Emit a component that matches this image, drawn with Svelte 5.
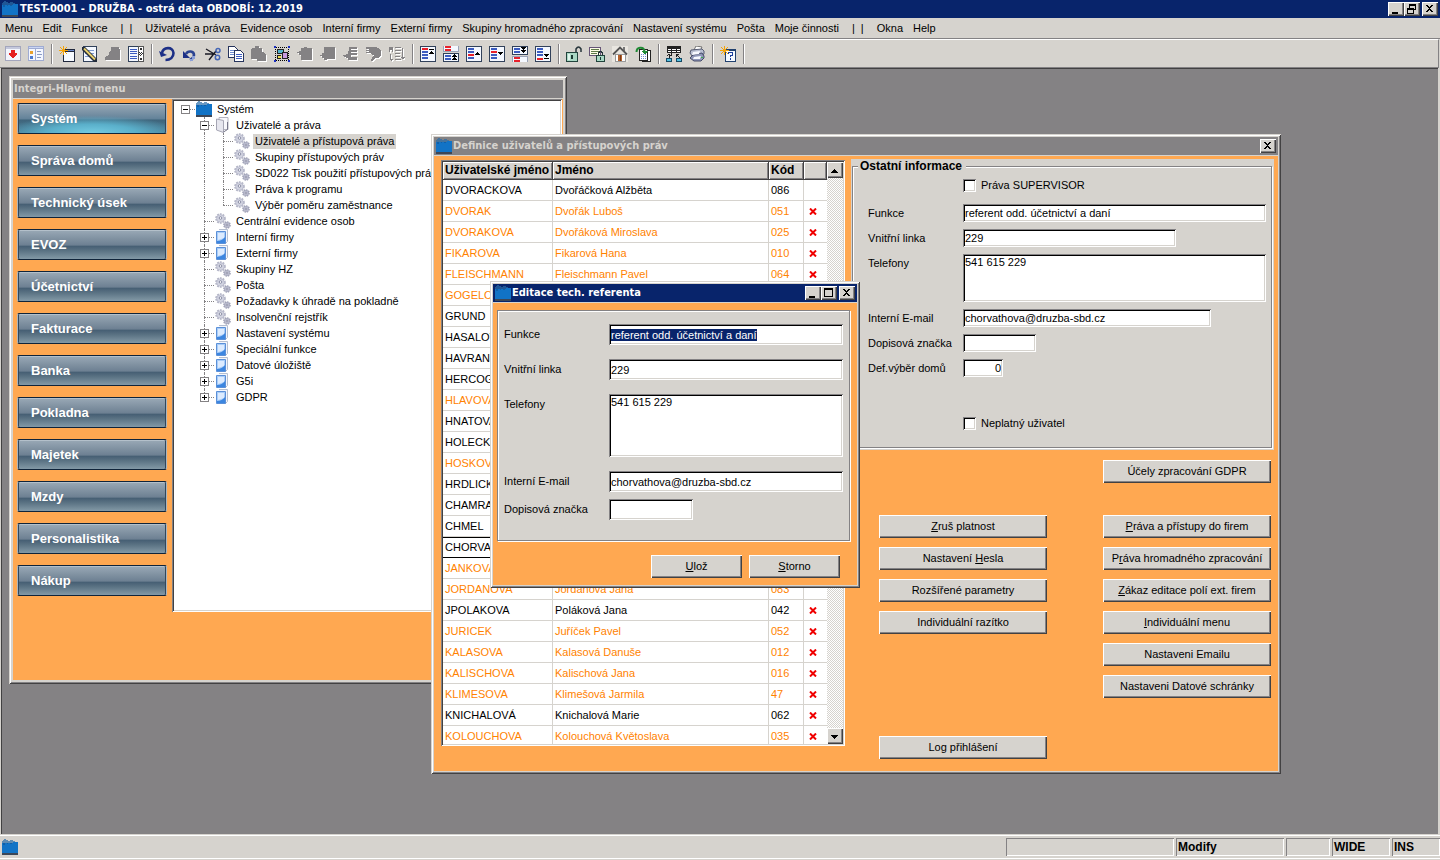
<script lang="ts">
  import { onMount } from 'svelte';

  type User = { login: string; name: string; code: string; active: boolean; flag: boolean };
  type Node = { label: string; level: number; kind: 'root' | 'open' | 'leaf' | 'folder'; last?: boolean };

  const menuItems = [
    'Menu', 'Edit', 'Funkce', '|', '|', 'Uživatelé a práva', 'Evidence osob', 'Interní firmy',
    'Externí firmy', 'Skupiny hromadného zpracování', 'Nastavení systému', 'Pošta',
    'Moje činnosti', '|', '|', 'Okna', 'Help'
  ];

  const modules = [
    'Systém', 'Správa domů', 'Technický úsek', 'EVOZ', 'Účetnictví', 'Fakturace',
    'Banka', 'Pokladna', 'Majetek', 'Mzdy', 'Personalistika', 'Nákup'
  ];
  let activeModule = $state('Systém');

  const tree: Node[] = [
    { label: 'Systém', level: 0, kind: 'root' },
    { label: 'Uživatelé a práva', level: 1, kind: 'open' },
    { label: 'Uživatelé a přístupová práva', level: 2, kind: 'leaf' },
    { label: 'Skupiny přístupových práv', level: 2, kind: 'leaf' },
    { label: 'SD022 Tisk použití přístupových práv', level: 2, kind: 'leaf' },
    { label: 'Práva k programu', level: 2, kind: 'leaf' },
    { label: 'Výběr poměru zaměstnance', level: 2, kind: 'leaf', last: true },
    { label: 'Centrální evidence osob', level: 1, kind: 'leaf' },
    { label: 'Interní firmy', level: 1, kind: 'folder' },
    { label: 'Externí firmy', level: 1, kind: 'folder' },
    { label: 'Skupiny HZ', level: 1, kind: 'leaf' },
    { label: 'Pošta', level: 1, kind: 'leaf' },
    { label: 'Požadavky k úhradě na pokladně', level: 1, kind: 'leaf' },
    { label: 'Insolvenční rejstřík', level: 1, kind: 'leaf' },
    { label: 'Nastavení systému', level: 1, kind: 'folder' },
    { label: 'Speciální funkce', level: 1, kind: 'folder' },
    { label: 'Datové úložiště', level: 1, kind: 'folder' },
    { label: 'G5i', level: 1, kind: 'folder' },
    { label: 'GDPR', level: 1, kind: 'folder', last: true }
  ];
  let selectedNode = $state('Uživatelé a přístupová práva');

  // login, name, code, active, flag
  const users: User[] = [
    ['DVORACKOVA', 'Dvořáčková Alžběta', '086', 1, 0],
    ['DVORAK', 'Dvořák Luboš', '051', 0, 1],
    ['DVORAKOVA', 'Dvořáková Miroslava', '025', 0, 1],
    ['FIKAROVA', 'Fikarová Hana', '010', 0, 1],
    ['FLEISCHMANN', 'Fleischmann Pavel', '064', 0, 1],
    ['GOGELOVA', '', '', 0, 0],
    ['GRUND', '', '', 1, 0],
    ['HASALOVA', '', '', 1, 0],
    ['HAVRAN', '', '', 1, 0],
    ['HERCOG', '', '', 1, 0],
    ['HLAVOVA', '', '', 0, 0],
    ['HNATOVA', '', '', 1, 0],
    ['HOLECKOVA', '', '', 1, 0],
    ['HOSKOVA', '', '', 0, 0],
    ['HRDLICKA', '', '', 1, 0],
    ['CHAMRA', '', '', 1, 0],
    ['CHMEL', '', '', 1, 0],
    ['CHORVATHOVA', '', '', 1, 0],
    ['JANKOVA', '', '', 0, 0],
    ['JORDANOVA', 'Jordanová Jana', '083', 0, 0],
    ['JPOLAKOVA', 'Poláková Jana', '042', 1, 1],
    ['JURICEK', 'Juříček Pavel', '052', 0, 1],
    ['KALASOVA', 'Kalasová Danuše', '012', 0, 1],
    ['KALISCHOVA', 'Kalischová Jana', '016', 0, 1],
    ['KLIMESOVA', 'Klimešová Jarmila', '47', 0, 1],
    ['KNICHALOVÁ', 'Knichalová Marie', '062', 1, 1],
    ['KOLOUCHOVA', 'Kolouchová Květoslava', '035', 0, 1]
  ].map(([login, name, code, active, flag]) => ({ login, name, code, active: !!active, flag: !!flag }) as User);
  let selectedUser = $state('CHORVATHOVA');

  // & marks the access key
  const leftActions = ['&Zruš platnost', 'Nastavení &Hesla', 'Rozšířené parametry', 'Individuální razítko'];
  const rightActions = [
    '&Práva a přístupy do firem', 'P&ráva hromadného zpracování', '&Zákaz editace polí ext. firem',
    '&Individuální menu', 'Nastaveni Emailu', 'Nastaveni Datové schránky'
  ];

  let person = $state({
    job: 'referent odd. účetnictví a daní',
    line: '229',
    phones: '541 615 229',
    email: 'chorvathova@druzba-sbd.cz',
    mark: '',
    houses: '0'
  });

  let jobInput: HTMLInputElement;
  onMount(() => {
    jobInput.focus();
    jobInput.select();
  });

  const page = (x = 0, y = 0, w = 16, h = 16) =>
    `<rect x="${x}" y="${y}" width="${w}" height="${h}" fill="#31415a"/><rect x="${x + 1}" y="${y + 1}" width="${w - 2}" height="${h - 2}" fill="#f4f8ff"/>`;
  const bars = (rows: [number, string][]) =>
    rows.map(([y, c]) => `<rect x="2" y="${y}" width="6" height="2" fill="${c}"/>`).join('');
  const R = '#e8212b';
  const B = '#3c5cc0';
  const ghost = (d: string) => `<path d="${d}" transform="translate(1 1)" fill="#fff"/><path d="${d}" fill="#848284"/>`;

  const icons: Record<string, string> = {
    download: `<path d="M0 0h16v15H0z" fill="#a3a6bd"/><path d="M1 3h14v11H1z" fill="#f3f5fc"/><path d="M1 1h14v2H1z" fill="#c4c8dc"/><path d="M6 4h4v3h2v2h-1v1h-1v1H9v1H7v-1H6v-1H5V9H4V7h2z" fill="#e42020"/>`,
    layout: `<path d="M0 0h16v15H0z" fill="#9fabd2"/><path d="M1 3h6v11H1zM8 3h7v11H8z" fill="#f4f7ff"/><path d="M1 1h14v1H1z" fill="#cbd6f3"/><path d="M2 5h3v3H2z" fill="#e9a12c"/><path d="M2 10h3v3H2z" fill="#4b79cf"/><path d="M9 5h4v1H9zM9 8h5v1H9zM9 11h4v1H9z" fill="#8a9bc4"/>`,
    create: `<path d="M4 3h12v13H4z" fill="#20283c"/><path d="M5 6h10v9H5z" fill="#f6faff"/><path d="M5 4h10v1H5z" fill="#6f8dd0"/><path d="M4 0h1v3l3-2-2 3h3v1H6l2 3-3-2v3H4V6L1 8l2-3H0V4h3L1 1l3 2z" fill="#f5a50a"/>`,
    edit: `${page(1, 0, 14, 16)}<path d="M3 4.500h9M3 7.500h9M3 10.500h9" stroke="#7e9ad0"/><path d="M0 1h3l12 12v3h-3L0 4z" fill="#222b3a" shape-rendering="auto"/><path d="M2 2.500l11 11" stroke="#e7cf6c" stroke-width="2" shape-rendering="auto"/>`,
    ghost1: ghost('M6 1h8v2l1 1v10H0v-3l1-1 3-1V6l1-1h1z'),
    list: `${page(0, 0, 11, 16)}<path d="M2 3.500h7M2 5.500h7M2 7.500h7M2 10.500h7M2 12.500h7" stroke="#3c5cc0"/><path d="M10 0h6v16h-6z" fill="#555"/><path d="M11 1h4v14h-4z" fill="#fff"/><path d="M12 2h2v2h-2zM12 12h2v2h-2zM11 6h1v1h-1zM13 6h1v1h-1zM12 7h1v1h-1zM14 7h1v1h-1zM11 8h1v1h-1zM13 8h1v1h-1zM12 9h1v1h-1z" fill="#333"/>`,
    undo: `<path d="M3 7C4 1 14 0 14.500 7c0 4-3 7-8 7" fill="none" stroke="#1c2f86" stroke-width="2.600" shape-rendering="auto"/><path d="M0 5l2 6 6-2z" fill="#1c2f86" shape-rendering="auto"/>`,
    redo: `<path d="M4 8c2-4 8-3 8 1 0 3-2 4-4 5" fill="none" stroke="#2b4391" stroke-width="2.600" shape-rendering="auto"/><path d="M1 5v7h7z" fill="#1c2f86" shape-rendering="auto"/><path d="M10 10h3v3h-2v2H8v-2h2z" fill="#8ca0d8"/>`,
    cut: `<path d="M1 3l10 6M0 8h9M4 14l7-9" stroke="#1a1a24" stroke-width="1.400" shape-rendering="auto"/><circle cx="13" cy="4.500" r="2" fill="none" stroke="#4566b5" stroke-width="1.500" shape-rendering="auto"/><circle cx="12.500" cy="11.500" r="2.200" fill="none" stroke="#4566b5" stroke-width="1.500" shape-rendering="auto"/>`,
    copy: `<path d="M.5.500h6l3 3v8h-9z" fill="#fff" stroke="#26345c"/><path d="M2 4.500h5M2 6.500h5M2 8.500h5" stroke="#6f8dd0"/><path d="M6.500 4.500h6l3 3v8h-9z" fill="#fff" stroke="#26345c"/><path d="M8 8.500h6M8 10.500h6M8 12.500h6" stroke="#3c5cc0"/>`,
    paste: ghost('M1 2h3V0h4v2h3v4h1l3 3v6H6v-2H0V3z'),
    select: `<path d="M1.500 1.500h13v13h-13z" fill="none" stroke="#000" stroke-dasharray="1 1"/><path d="M3 3h7v5H3z" fill="#222"/><path d="M4 4h5v3H4z" fill="#52b6cf"/><path d="M8 6h6v7H8z" fill="#222"/><path d="M9 7h4v5H9z" fill="#c79be0"/><path d="M3 9h4v4H3z" fill="#222"/><path d="M4 10h3v2H4z" fill="#f0e04a"/><path d="M0 0h2v2H0zM14 0h2v2h-2zM0 14h2v2H0zM14 14h2v2h-2z" fill="#1b2fc0"/>`,
    ghost2: ghost('M4 2h3V1h3v1h5v12H4V9H2V7H0V6h2V5h2z'),
    ghost3: ghost('M4 1h11v12H7v1H4v-2H2v-2H0V9h2V7h2z'),
    ghost4: ghost('M6 1h8v2H8v1h6v2H8v1h6v2H8v2h6v3H5v-2H3v-1H1v-1H0V9h3V8h2V5h1z'),
    ghost5: ghost('M0 1h9l4 1 2 3v4l-3 3H9l-2 2-1 1H5l1-4 2-2H6L4 7H0V6h3V5H0V4h3V3H0z'),
    ghost6: ghost('M0 1h4v5H3V4H1v2H0zM6 1h6v1H6zM6 4h6v1H6zM6 7h5v1H6zM6 10h5v1H6zM6 13h6v1H6zM1 8h1v5h2l-2 2-2-2h1zM13 2h1v9h2l-2 3-3-3h2z'),
    first: `${page()}${bars([[2, R], [5, B], [8, B], [11, B]])}<path d="M9 3h5v1H9zM11 5h1v1h1v1h1v1H9V7h1V6h1z" fill="#000"/>`,
    pageUp: `<path d="M0 0h1v5h14V0h1v6H0z" fill="#9aa3b8"/><path d="M1 0h14v5H1z" fill="#f4f8ff"/>${page(0, 7, 16, 9)}${bars([[0, R], [3, R], [9, B], [12, B]])}<path d="M11 8h1v1h1v1h1v1H9v-1h1V9h1zM11 11h1v1h1v1h1v1H9v-1h1v-1h1z" fill="#000"/>`,
    prev: `${page()}${bars([[2, B], [5, B], [8, R], [11, B]])}<path d="M11 6h1v1h1v1h1v1H9V8h1V7h1z" fill="#000"/>`,
    next: `${page()}${bars([[2, B], [5, R], [8, B], [11, B]])}<path d="M9 6h5v1h-1v1h-1v1h-1V8h-1V7H9z" fill="#000"/>`,
    pageDown: `${page(0, 0, 16, 9)}<path d="M0 10h16v6h-1v-5H1v5H0z" fill="#9aa3b8"/><path d="M1 11h14v5H1z" fill="#f4f8ff"/>${bars([[2, B], [5, B], [11, R], [14, R]])}<path d="M9 1h5v1h-1v1h-1v1h-1V3h-1V2H9zM9 4h5v1h-1v1h-1v1h-1V6h-1V5H9z" fill="#000"/>`,
    lastRec: `${page()}${bars([[2, B], [5, B], [8, B], [12, R]])}<path d="M9 8h5v1h-1v1h-1v1h-1v-1h-1V9H9zM9 12h5v1H9z" fill="#000"/>`,
    unlock: `<path d="M10 7V3q2.500-4 5 0v3" fill="none" stroke="#26343a" stroke-width="1.500" shape-rendering="auto"/><path d="M0 6h12v10H0z" fill="#21433c"/><path d="M1 7h10v8H1z" fill="#a9d8c4"/><path d="M2 8h2v6H2z" fill="#e0f5ec"/><path d="M5 9h2v4H5z" fill="#1b3a33"/>`,
    lockList: `<path d="M0 1h12v9H0z" fill="#657"/><path d="M1 2h10v7H1z" fill="#fdfde8"/><path d="M2 3.500h8M2 5.500h8M2 7.500h6" stroke="#5f7a4a"/><path d="M9.500 10V7q2-3 4 0v3" fill="none" stroke="#26343a"/><path d="M7 9h9v7H7z" fill="#21433c"/><path d="M8 10h7v5H8z" fill="#a9d8c4"/><path d="M11 11h1v3h-1z" fill="#1b3a33"/>`,
    home: `<path d="M0 0h16v16H0z" fill="#e9e6e0"/><path d="M11 1h2v4h-2z" fill="#777"/><path d="M3 8h10v7H3z" fill="#fff" stroke="#9a9a9a"/><path d="M1 8.500L8 1.500l7 7" fill="none" stroke="#555" stroke-width="1.800" shape-rendering="auto"/><path d="M6 9h4v6H6z" fill="#b5622c"/><path d="M8 9h1v6H8z" fill="#7b3a14"/>`,
    refresh: `<path d="M7.500 4.500h8v11h-8z" fill="#fff" stroke="#222"/><path d="M4.500 3.500h8v11h-8z" fill="#fff" stroke="#222"/><path d="M6 8.500h5M6 10.500h5M6 12.500h5" stroke="#6f8dd0" stroke-dasharray="1 1"/><path d="M1.500 6c0-5 7-6 8-1" fill="none" stroke="#1f8a34" stroke-width="2" shape-rendering="auto"/><path d="M6 5h7l-3 4z" fill="#1f8a34"/>`,
    tree: `<path d="M1 0h14v7H1z" fill="#222"/><path d="M2 3h3v1H2zM6 3h4v1H6zM11 3h3v1h-3zM2 5h3v1H2zM6 5h4v1H6zM11 5h3v1h-3z" fill="#fff"/><path d="M5.500 7v2H3v3M10 8l4 4M1 10l2-1.500L5 10M10 11V8h3" fill="none" stroke="#222"/><path d="M0 12h6v4H0zM10 12h6v4h-6z" fill="#174b66"/><path d="M1 13h4v2H1zM11 13h4v2h-4z" fill="#54bfe0"/>`,
    print: `<g shape-rendering="auto"><path d="M7 0l6 1-2 4-6-1z" fill="#fff" stroke="#555" stroke-width=".8"/><path d="M2 4l11-1 2 2v3l-3 2H3L1 7z" fill="#b9bfd2" stroke="#4b5068" stroke-width=".9"/><path d="M4 9l9-2 2 3v2l-3 3H5l-4-3z" fill="#8f97b8" stroke="#3c4160" stroke-width=".9"/><path d="M4 6l7-1-1 3-7 1zM5 11l7-1-1 3H4z" fill="#f6f8ff"/></g><path d="M12 11h2v1h-2z" fill="#3cae4e"/>`,
    help: `<path d="M5 3h11v13H5z" fill="#20406e"/><path d="M6 5h9v10H6z" fill="#f6faff"/><path d="M8 8V6h5v4h-2v1h-1V9h2V7H9v1zM10 12h1v2h-1z" fill="#1c3f9c"/><path d="M4 0h1v3l3-2-2 3h3v1H6l2 3-3-2v3H4V6L1 8l2-3H0V4h3L1 1l3 2z" fill="#f5a50a"/>`,
    logo: `<path d="M0 4h16v10H0z" fill="#1173c6"/><path d="M2 0h2v1h2v1h2V1h3v1h2v2H0V2h1V1h1z" fill="#2a6ca8" opacity=".7"/><path d="M1 4h2v2H1zM5 4h1v1H5zM8 4h2v1H8z" fill="#0f5fa8"/><path d="M11 3h5v1h-5z" fill="#1173c6"/><path d="M0 14h16v2H0z" fill="#3c4656"/>`,
    gears: `<g shape-rendering="auto"><circle cx="5.500" cy="5.500" r="4.400" fill="none" stroke="#b3b5c6" stroke-width="1.800" stroke-dasharray="1.800 1"/><circle cx="5.500" cy="5.500" r="3.800" fill="#d2d4e1" stroke="#b6b8ca" stroke-width=".8"/><circle cx="5.500" cy="5" r="1.300" fill="#fff" stroke="#8a8da5" stroke-width="1"/><circle cx="12" cy="12" r="3" fill="none" stroke="#9a9cb2" stroke-width="1.600" stroke-dasharray="1.500 .8"/><circle cx="12" cy="12" r="2.700" fill="#c6c8d9" stroke="#9a9cb2" stroke-width=".6"/><circle cx="12" cy="12" r="1" fill="#fff" stroke="#777a94" stroke-width=".8"/></g>`,
    openFolder: `<g shape-rendering="auto"><path d="M4 .5h9v12H4z" fill="#f7f7fb" stroke="#b4b4c0"/><path d="M1.500 2l7 1.500v12L1.500 13z" fill="#e6e6ee" stroke="#a6a6b4"/><path d="M8.500 15l4-2.500V5" fill="none" stroke="#77778a"/></g>`,
    folder: `<g shape-rendering="auto"><path d="M4 .5h8.500v12L10 15" fill="#f3f6fc" stroke="#b6bfd0"/><path d="M1.500 2.500h9v12h-9z" fill="#a9cdf8" stroke="#5b90d8"/><path d="M3 4h6v5L3 11z" fill="#dcebff"/><path d="M2 12q5 0 8-4v6H2z" fill="#3c86e0"/></g>`
  };

  const toolbar = [
    ['download', 'layout'],
    ['create', 'edit', 'ghost1', 'list'],
    ['undo', 'redo', 'cut', 'copy', 'paste', 'select', 'ghost2', 'ghost3', 'ghost4', 'ghost5', 'ghost6'],
    ['first', 'pageUp', 'prev', 'next', 'pageDown', 'lastRec'],
    ['unlock', 'lockList', 'home', 'refresh'],
    ['tree', 'print'],
    ['help']
  ];

  const glyphs: Record<string, string> = {
    min: 'M3 9h6v2H3z',
    max: 'M2 1h9v9H2zM3 3v6h7V3z',
    restore: 'M4 1h7v6H9v4H2V5h2zM5 3v2h4v1h1V3zM3 7v3h5V7z',
    close: 'M3 2h2v1h1v1h1V3h1V2h2v1H9v1H8v1H7v1h1v1h1v1h1v1H8V8H7V7H6v1H5v1H3V8h1V7h1V6h1V5H5V4H4V3H3z',
    up: 'M6 4h1v1h1v1h1v1h1v1H3V7h1V6h1V5h1z',
    down: 'M3 4h7v1H9v1H8v1H7v1H6V7H5V6H4V5H3z'
  };
</script>

{#snippet icon(name: string)}
  <svg class="icon" viewBox="0 0 16 16" shape-rendering="crispEdges" aria-hidden="true">{@html icons[name]}</svg>
{/snippet}

{#snippet ctl(name: string, label: string)}
  <button class="ctl {name}" aria-label={label}>
    <svg viewBox="0 0 13 12" shape-rendering="crispEdges"><path d={glyphs[name]} fill-rule="evenodd" /></svg>
  </button>
{/snippet}

{#snippet caption(text: string)}
  {@const at = text.indexOf('&')}
  {#if at < 0}{text}{:else}{text.slice(0, at)}<u>{text[at + 1]}</u>{text.slice(at + 2)}{/if}
{/snippet}

<div class="app">
  <header class="titlebar main">
    {@render icon('logo')}
    <h1>TEST-0001 - DRUŽBA - ostrá data OBDOBÍ: 12.2019</h1>
    {@render ctl('min', 'Minimalizovat')}
    {@render ctl('restore', 'Obnovit')}
    {@render ctl('close', 'Zavřít')}
  </header>

  <nav class="menubar">
    {#each menuItems as item}
      {#if item === '|'}
        <span class="bar">|</span>
      {:else}
        <button>{item}</button>
      {/if}
    {/each}
  </nav>

  <div class="toolbar" role="toolbar">
    {#each toolbar as group}
      {#each group as name}
        <button aria-label={name} disabled={name.startsWith('ghost')}>{@render icon(name)}</button>
      {/each}
      <span class="sep"></span>
    {/each}
  </div>

  <main class="desktop">
    <section class="window menu-window">
      <div class="titlebar inactive"><h2>Integri-Hlavní menu</h2></div>
      <div class="menu-body">
        <div class="modules">
          {#each modules as name}
            <button class:active={name === activeModule} onclick={() => (activeModule = name)}>{name}</button>
          {/each}
        </div>
        <ul class="tree">
          {#each tree as node}
            <li>
              {#if node.level > 0}<span class="cell"></span>{/if}
              {#if node.level === 2}<span class="cell line"></span>{/if}
              <span class="cell branch" class:line={node.level > 0} class:last={node.last}>
                {#if node.kind !== 'leaf'}
                  <svg class="expander" viewBox="0 0 9 9" shape-rendering="crispEdges">
                    <path d="M0 0h9v9H0z" fill="#848284" /><path d="M1 1h7v7H1z" fill="#fff" />
                    <path d={node.kind === 'folder' ? 'M2 4h5v1H2zM4 2h1v5H4z' : 'M2 4h5v1H2z'} />
                  </svg>
                {/if}
              </span>
              {@render icon(node.kind === 'root' ? 'logo' : node.kind === 'open' ? 'openFolder' : node.kind === 'leaf' ? 'gears' : 'folder')}
              <button class:selected={node.label === selectedNode} onclick={() => (selectedNode = node.label)}>{node.label}</button>
            </li>
          {/each}
        </ul>
      </div>
    </section>

    <section class="window users-window">
      <div class="titlebar inactive">
        {@render icon('logo')}
        <h2>Definice uživatelů a přístupových práv</h2>
        {@render ctl('close', 'Zavřít')}
      </div>
      <div class="users-body">
        <div class="grid-box">
          <div class="grid-scroll">
            <table>
              <colgroup><col class="c-login" /><col class="c-name" /><col class="c-code" /><col /></colgroup>
              <thead>
                <tr><th>Uživatelské jméno</th><th>Jméno</th><th>Kód</th><th></th></tr>
              </thead>
              <tbody>
                {#each users as user}
                  <tr class:invalid={!user.active} class:current={user.login === selectedUser} onclick={() => (selectedUser = user.login)}>
                    <td>{user.login}</td>
                    <td>{user.name}</td>
                    <td>{user.code}</td>
                    <td class="flag">
                      {#if user.flag}
                        <svg viewBox="0 0 8 7"><path d="M1 .5l6 6M7 .5l-6 6" stroke="#f00000" stroke-width="2" /></svg>
                      {/if}
                    </td>
                  </tr>
                {/each}
              </tbody>
            </table>
          </div>
          <div class="scrollbar">
            {@render ctl('up', 'Nahoru')}
            {@render ctl('down', 'Dolů')}
          </div>
        </div>

        <div class="side">
          <div class="panel">
            <fieldset class="etched">
              <legend>Ostatní informace</legend>
              <label class="check"><input type="checkbox" />Práva SUPERVISOR</label>
              <div class="form">
                <label for="job">Funkce</label>
                <input id="job" bind:value={person.job} />
                <label for="line">Vnitřní linka</label>
                <input id="line" class="w-line" bind:value={person.line} />
                <label for="phones">Telefony</label>
                <textarea id="phones" bind:value={person.phones}></textarea>
                <label for="email">Interní E-mail</label>
                <input id="email" class="w-email" bind:value={person.email} />
                <label for="mark">Dopisová značka</label>
                <input id="mark" class="w-mark" bind:value={person.mark} />
                <label for="houses">Def.výběr domů</label>
                <input id="houses" class="w-houses" bind:value={person.houses} />
              </div>
              <label class="check"><input type="checkbox" />Neplatný uživatel</label>
            </fieldset>
          </div>

          <div class="actions">
            <div class="column left">
              {#each leftActions as text}
                <button class="push">{@render caption(text)}</button>
              {/each}
              <button class="push log">Log přihlášení</button>
            </div>
            <div class="column">
              <button class="push gdpr">Účely zpracování GDPR</button>
              {#each rightActions as text}
                <button class="push">{@render caption(text)}</button>
              {/each}
            </div>
          </div>
        </div>
      </div>
    </section>

    <section class="window dialog" role="dialog" aria-label="Editace tech. referenta">
      <div class="titlebar">
        {@render icon('logo')}
        <h2>Editace tech. referenta</h2>
        {@render ctl('min', 'Minimalizovat')}
        {@render ctl('max', 'Maximalizovat')}
        {@render ctl('close', 'Zavřít')}
      </div>
      <div class="dialog-body">
        <div class="form large etched">
          <label for="d-job">Funkce</label>
          <input id="d-job" bind:this={jobInput} value={person.job} />
          <label for="d-line">Vnitřní linka</label>
          <input id="d-line" value={person.line} />
          <label for="d-phones">Telefony</label>
          <textarea id="d-phones" value={person.phones}></textarea>
          <label for="d-email">Interní E-mail</label>
          <input id="d-email" value={person.email} />
          <label class="tight" for="d-mark">Dopisová značka</label>
          <input class="tight w-mark" id="d-mark" value={person.mark} />
        </div>
        <div class="dialog-buttons">
          <button class="push">{@render caption('&Ulož')}</button>
          <button class="push">{@render caption('&Storno')}</button>
        </div>
      </div>
    </section>
  </main>

  <footer class="statusbar">
    {@render icon('logo')}
    <span class="field w168"></span>
    <span class="field w108">Modify</span>
    <span class="field w44"></span>
    <span class="field w58">WIDE</span>
    <span class="field w48">INS</span>
  </footer>
</div>

<style>
  :global(body) {
    margin: 0;
  }
  .app {
    --face: #d6d3ce;
    --shadow: #848284;
    --dark: #424142;
    --navy: #08246b;
    --orange: #ffa851;
    min-height: 100vh;
    display: flex;
    flex-direction: column;
    background: var(--face);
    color: #000;
    font: 11px/13px 'Liberation Sans', Arial, sans-serif;
    overflow: hidden;
  }
  button,
  input,
  textarea {
    font: inherit;
    color: inherit;
    box-sizing: border-box;
    margin: 0;
    padding: 0;
    border: 0;
    border-radius: 0;
    background: none;
    outline: none;
  }
  .icon {
    width: 16px;
    height: 16px;
    flex: none;
    display: block;
  }

  /* title bars */
  .titlebar {
    display: flex;
    align-items: center;
    height: 18px;
    padding: 0 2px;
    background: var(--navy);
    color: #fff;
  }
  .titlebar.inactive {
    background: var(--shadow);
    color: var(--face);
  }
  .titlebar h1,
  .titlebar h2 {
    flex: 1;
    margin: 0;
    padding-left: 2px;
    font: bold 11px/18px 'DejaVu Sans Condensed', 'DejaVu Sans', sans-serif;
    white-space: nowrap;
  }
  .titlebar h2 {
    padding-left: 1px;
  }
  .menu-window .titlebar {
    padding-left: 0;
  }
  .ctl {
    width: 16px;
    height: 14px;
    flex: none;
    background: var(--face);
    box-shadow: inset 1px 1px #fff, inset -1px -1px var(--dark), inset -2px -2px var(--shadow);
  }
  .ctl svg {
    width: 13px;
    height: 12px;
    display: block;
    margin: 1px;
  }
  .titlebar .close:not(:first-child) {
    margin-left: 2px;
  }

  /* menu and toolbar */
  .menubar {
    display: flex;
    align-items: center;
    gap: 10px;
    height: 20px;
    padding-left: 5px;
    white-space: nowrap;
    border-bottom: 1px solid var(--shadow);
  }
  .bar {
    padding-left: 3px;
  }
  .bar + .bar {
    margin: 0 3px 0 -7px;
  }
  .toolbar {
    display: flex;
    align-items: center;
    gap: 7px;
    height: 27px;
    padding-left: 5px;
    border-top: 1px solid #fff;
    border-bottom: 1px solid var(--shadow);
    border-right: 1px solid var(--shadow);
    margin-right: 1px;
  }
  .sep {
    width: 1px;
    height: 20px;
    background: var(--shadow);
    box-shadow: 1px 0 #fff;
  }

  /* workspace */
  .desktop {
    flex: 1;
    position: relative;
    min-height: 720px;
    background: var(--shadow);
    border-top: 1px solid var(--dark);
    border-left: 1px solid var(--dark);
    margin: 0 2px 0 1px;
  }
  .window {
    position: absolute;
    box-sizing: border-box;
    display: flex;
    flex-direction: column;
    padding: 3px;
    background: var(--face);
    box-shadow: inset 1px 1px var(--face), inset -1px -1px var(--dark), inset 2px 2px #fff, inset -2px -2px var(--shadow);
  }
  .window > .titlebar {
    margin-bottom: 1px;
  }
  .menu-window {
    left: 7px;
    top: 7px;
    width: 558px;
    height: 608px;
    padding: 4px;
  }
  .users-window {
    left: 429px;
    top: 65px;
    width: 850px;
    height: 640px;
  }
  .dialog {
    left: 488px;
    top: 212px;
    width: 370px;
    min-height: 307px;
  }

  /* main menu window */
  .menu-body {
    flex: 1;
    display: grid;
    grid-template-columns: 159px 1fr;
    background: var(--orange);
  }
  .modules {
    display: flex;
    flex-direction: column;
    gap: 11px;
    padding: 4px 5px 0 4px;
  }
  .modules button {
    height: 31px;
    padding-left: 13px;
    border: 1px solid #a9b4bd;
    border-top-color: #10243a;
    border-bottom-color: #10243a;
    border-radius: 2px;
    box-shadow: inset 1px 0 #31475c, inset -1px 0 #31475c, inset 0 1px #b4c0ca;
    background: linear-gradient(#9aa9b6 0%, #6d8092 52%, #465f74 56%, #5b7384 72%, #8399a6 100%);
    color: #fff;
    font: bold 13px/15px 'Liberation Sans', Arial, sans-serif;
    text-align: left;
  }
  .modules button.active {
    background: radial-gradient(ellipse 60% 60% at 50% 100%, #74cbe2 0%, #5aafca 50%, transparent 100%), linear-gradient(#9aa9b6 0%, #64839a 50%, #3f657c 56%, #4d7f97 100%);
  }
  .tree {
    margin: 0 1px 68px 0;
    padding: 2px 2px 2px 5px;
    list-style: none;
    background: #fff;
    box-shadow: inset 1px 1px var(--shadow), inset -1px -1px #fff, inset 2px 2px var(--dark), inset -2px -2px var(--face);
    overflow: hidden;
  }
  .tree li {
    display: flex;
    align-items: center;
    height: 16px;
    white-space: nowrap;
  }
  .tree li button {
    height: 15px;
    margin-left: 3px;
    padding: 0 2px;
  }
  .tree li .selected {
    background: var(--face);
  }
  .cell {
    position: relative;
    width: 19px;
    height: 16px;
    flex: none;
  }
  .line::before,
  .branch::after {
    content: '';
    position: absolute;
    left: 8px;
    top: 0;
    height: 16px;
    border-left: 1px dotted var(--shadow);
  }
  .line.last::before {
    height: 8px;
  }
  .branch::after {
    top: 8px;
    width: 10px;
    height: 0;
    border-left: 0;
    border-top: 1px dotted var(--shadow);
  }
  .expander {
    position: absolute;
    left: 4px;
    top: 4px;
    z-index: 1;
    width: 9px;
    height: 9px;
  }

  /* users window */
  .users-body {
    flex: 1;
    min-height: 0;
    display: grid;
    grid-template-columns: 404px 1fr;
    grid-template-rows: 100%;
    gap: 6px;
    padding: 0 4px 0 7px;
    background: var(--orange);
  }
  .grid-box {
    display: flex;
    margin: 4px 0 25px;
    padding: 2px;
    overflow: hidden;
    background: #fff;
    box-shadow: inset 1px 1px var(--shadow), inset -1px -1px #fff, inset 2px 2px var(--dark), inset -2px -2px var(--face);
  }
  .grid-scroll {
    flex: 1;
    overflow: hidden;
  }
  table {
    width: 100%;
    table-layout: fixed;
    border-collapse: separate;
    border-spacing: 0;
  }
  .c-login {
    width: 110px;
  }
  .c-name {
    width: 216px;
  }
  .c-code {
    width: 35px;
  }
  th,
  td {
    box-sizing: border-box;
    padding: 0 0 0 2px;
    text-align: left;
    white-space: nowrap;
    overflow: hidden;
  }
  th {
    height: 18px;
    border-right: 1px solid var(--dark);
    border-bottom: 1px solid var(--dark);
    background: var(--face);
    box-shadow: inset 1px 1px #fff, inset -1px -1px var(--shadow);
    font-size: 12px;
  }
  td {
    height: 21px;
    border-right: 1px solid var(--face);
    border-bottom: 1px solid var(--face);
  }
  td:last-child {
    border-right: 0;
  }
  .invalid {
    color: #ff8200;
  }
  .current td {
    border-top: 1px solid #000;
    border-bottom: 1px solid #000;
  }
  .flag svg {
    display: block;
    width: 8px;
    height: 7px;
    margin-left: 3px;
  }
  .scrollbar {
    display: flex;
    flex-direction: column;
    justify-content: space-between;
    width: 16px;
    background: repeating-conic-gradient(var(--face) 0 25%, #fff 0 50%) 0 0 / 2px 2px;
  }
  .scrollbar .ctl {
    height: 16px;
  }
  .scrollbar .ctl svg {
    margin-top: 2px;
  }

  .side {
    display: flex;
    flex-direction: column;
  }
  .panel {
    margin-top: 3px;
    padding: 0 2px 2px 1px;
    background: var(--face);
  }
  .etched {
    border: 1px solid var(--shadow);
    box-shadow: inset 1px 1px #fff, 1px 1px #fff;
  }
  fieldset {
    margin: 0;
    padding: 0 5px 17px 15px;
    min-width: 0;
  }
  legend {
    margin-left: -10px;
    padding: 0 4px 0 2px;
    background: var(--face);
    font: bold 12px/14px 'Liberation Sans', Arial, sans-serif;
  }
  .check {
    display: flex;
    align-items: center;
    gap: 5px;
    width: max-content;
    margin: 6px 0 12px 95px;
  }
  .form + .check {
    margin: 40px 0 0 95px;
  }
  .check input {
    appearance: none;
    width: 13px;
    height: 13px;
  }
  .form {
    display: grid;
    grid-template-columns: 95px 1fr;
    row-gap: 7px;
    align-items: start;
  }
  .form label {
    line-height: 18px;
  }
  .form input {
    width: 100%;
    height: 18px;
  }
  .form input,
  .form textarea,
  .check input {
    background: #fff;
    box-shadow: inset 1px 1px var(--shadow), inset -1px -1px #fff, inset 2px 2px #000, inset -2px -2px var(--face);
  }
  .form input,
  .form textarea {
    padding: 0 2px;
  }
  .form textarea {
    width: 100%;
    height: 48px;
    padding: 2px;
    display: block;
    resize: none;
    overflow: hidden;
  }
  .form input::selection {
    background: var(--navy);
    color: #fff;
  }
  .form .w-line {
    width: 213px;
  }
  .form .w-email {
    width: 248px;
  }
  .form .w-mark {
    width: 73px;
  }
  .form .w-houses {
    width: 40px;
    text-align: right;
  }

  .push {
    height: 23px;
    background: var(--face);
    box-shadow: inset 1px 1px #fff, inset -1px -1px var(--dark), inset -2px -2px var(--shadow);
    text-align: center;
    white-space: nowrap;
  }
  .actions {
    flex: 1;
    display: flex;
    justify-content: space-between;
    padding: 10px 3px 12px 28px;
  }
  .column {
    display: flex;
    flex-direction: column;
    gap: 9px;
    width: 168px;
  }
  .column.left {
    padding-top: 55px;
  }
  .gdpr {
    margin-bottom: 23px;
  }
  .log {
    margin-top: auto;
  }

  /* edit dialog */
  .dialog-body {
    flex: 1;
    padding: 7px 7px 7px 4px;
    background: var(--orange);
  }
  .form.large {
    grid-template-columns: 105px 1fr;
    row-gap: 14px;
    padding: 13px 6px 20px;
    background: var(--face);
  }
  .large label {
    line-height: 21px;
  }
  .large input {
    height: 21px;
  }
  .large textarea {
    height: 63px;
  }
  .form.large .w-mark {
    width: 84px;
  }
  .large .tight {
    margin-top: -7px;
  }
  .dialog-buttons {
    display: flex;
    justify-content: flex-end;
    gap: 7px;
    padding: 14px 10px 0 0;
  }
  .dialog-buttons .push {
    width: 91px;
  }

  /* status bar */
  .statusbar {
    display: flex;
    align-items: center;
    gap: 2px;
    height: 22px;
    margin-top: 1px;
    padding: 0 0 0 2px;
    border-top: 1px solid #fff;
    border-bottom: 1px solid #fff;
    box-shadow: 0 -1px var(--face);
    margin-bottom: 1px;
  }
  .statusbar .icon {
    margin-right: auto;
  }
  .field {
    box-sizing: border-box;
    height: 18px;
    padding-left: 2px;
    box-shadow: inset 1px 1px var(--shadow), inset -1px -1px #fff;
    font: bold 12px/18px 'Liberation Sans', Arial, sans-serif;
  }
  .w168 {
    width: 168px;
  }
  .w108 {
    width: 108px;
  }
  .w44 {
    width: 44px;
  }
  .w58 {
    width: 58px;
  }
  .w48 {
    width: 48px;
  }
</style>
